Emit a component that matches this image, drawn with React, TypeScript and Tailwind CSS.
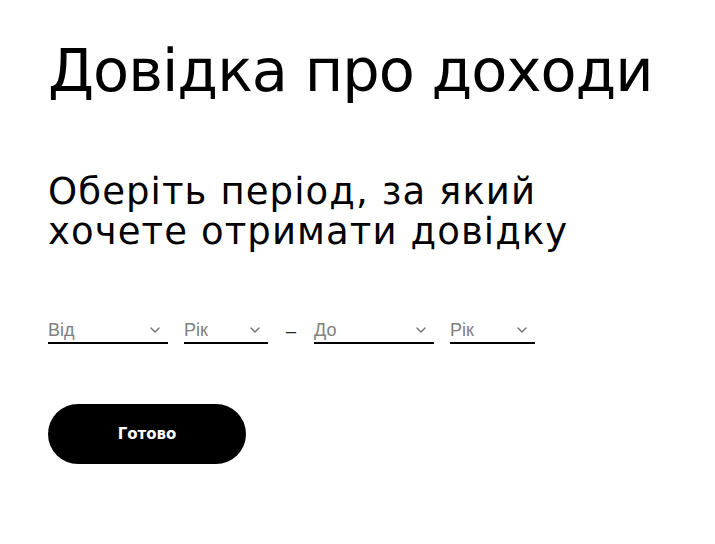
import { ChevronDown } from "lucide-react";

type SelectProps = {
    placeholder: string;
    width: string;
};

function PeriodSelect({ placeholder, width }: SelectProps) {
    return (
        <div className={`flex items-center justify-between border-b-2 border-black pr-[5px] ${width}`}>
            <span className="text-[18px] leading-[24px] text-[#808080]">{placeholder}</span>
            <ChevronDown className="h-[16px] w-[16px] text-[#707070]" strokeWidth={2} />
        </div>
    );
}

export default function App() {
    return (
        <div
            className="min-h-screen bg-white px-12 pt-[32px] text-black"
            style={{ fontFamily: '"Liberation Sans", Arial, sans-serif' }}
        >
            <h1
                className="text-[59px] leading-[77px] font-normal tracking-[-1px]"
                style={{ fontFamily: '"DejaVu Sans", sans-serif' }}
            >
                Довідка про доходи
            </h1>

            <h2
                className="mt-[63px] text-[37px] leading-[40px] font-normal tracking-[1.1px]"
                style={{ fontFamily: '"DejaVu Sans", sans-serif' }}
            >
                Оберіть період, за який
                <br />
                хочете отримати довідку
            </h2>

            <div className="mt-[66px] flex items-center">
                <PeriodSelect placeholder="Від" width="w-[120px]" />
                <div className="ml-4">
                    <PeriodSelect placeholder="Рік" width="w-[84px]" />
                </div>
                <span className="mx-[18px] text-[18px] leading-[24px] text-[#222]">–</span>
                <PeriodSelect placeholder="До" width="w-[120px]" />
                <div className="ml-4">
                    <PeriodSelect placeholder="Рік" width="w-[85px]" />
                </div>
            </div>

            <button
                className="mt-[60px] flex h-[60px] w-[198px] items-center justify-center rounded-full bg-black text-[15px] font-bold text-white"
                style={{ fontFamily: '"DejaVu Sans", sans-serif' }}
            >
                Готово
            </button>
        </div>
    );
}
